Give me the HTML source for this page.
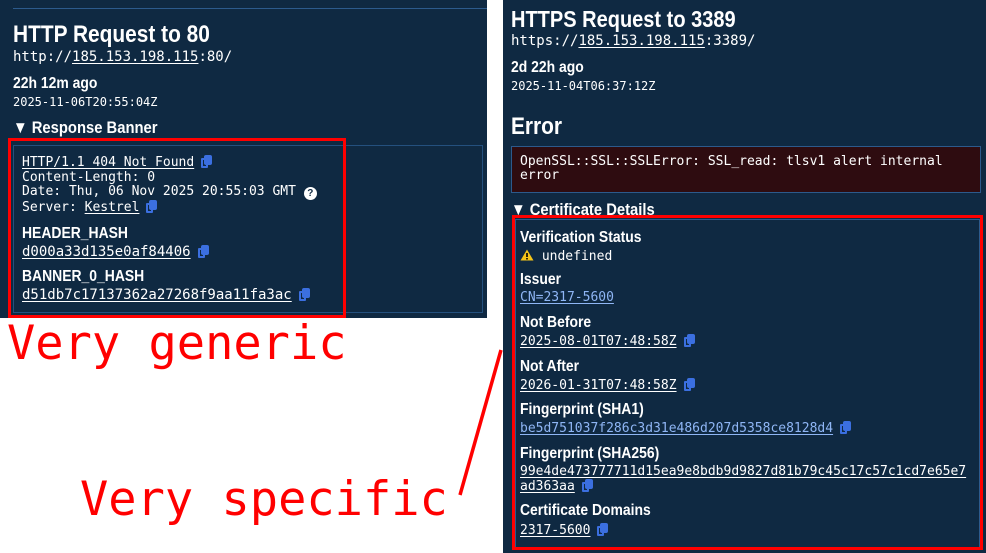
<!DOCTYPE html>
<html><head><meta charset="utf-8"><style>
body{margin:0;width:986px;height:553px;background:#fff;position:relative;overflow:hidden;font-family:"Liberation Sans",sans-serif;color:#fff}
.p{position:absolute;background:#0f2942}
.t{position:absolute;white-space:nowrap;line-height:1}
.h{font-family:"Liberation Sans Narrow","Liberation Sans",sans-serif;font-weight:bold;transform-origin:left top;transform:scaleX(.87)}
.m{font-family:"DejaVu Sans Mono","Liberation Mono",monospace;font-size:13px}
.u{text-decoration:underline;text-underline-offset:2px}
.lb{color:#8fb6f5}
.box{position:absolute;border:1px solid #2c5a8c}
.red{position:absolute;border:3px solid #ff0000}
.c{display:inline-block;width:11px;height:13px;position:relative;margin-left:7px;vertical-align:-2px}
.c:before{content:"";position:absolute;left:0;top:3px;width:7px;height:10px;border:2px solid #3b6fe0;border-radius:1px;box-sizing:border-box}
.c:after{content:"";position:absolute;left:3px;top:0;width:8px;height:10px;background:#3b6fe0;border-radius:2px}
.ann{position:absolute;font-family:"DejaVu Sans Mono",monospace;color:#f00;font-size:47px;line-height:1;white-space:nowrap}
</style></head><body>
<div class="p" style="left:0;top:0;width:487px;height:318px"></div>
<div style="position:absolute;left:13px;top:8px;width:474px;height:1px;background:#2c5a8c"></div>
<div class="t h" style="left:13px;top:23px;font-size:24px">HTTP Request to 80</div>
<div class="t m" style="left:13px;top:50px;font-size:14px">http://<span class="u">185.153.198.115</span>:80/</div>
<div class="t h" style="left:13px;top:76px;font-size:16px">22h 12m ago</div>
<div class="t m" style="left:13px;top:96px;font-size:12px">2025-11-06T20:55:04Z</div>
<div class="t h" style="left:13px;top:119px;font-size:17px">▼ Response Banner</div>
<div class="box" style="left:13px;top:145px;width:468px;height:166px;border-color:#24507e"></div>
<div class="red" style="left:8px;top:138px;width:332px;height:174px"></div>
<div class="t m" style="left:22px;top:155px"><span class="u">HTTP/1.1 404 Not Found</span><span class="c"></span></div>
<div class="t m" style="left:22px;top:171px">Content-Length: 0</div>
<div class="t m" style="left:22px;top:185px">Date: Thu, 06 Nov 2025 20:55:03 GMT <span style="display:inline-block;width:13px;height:13px;border-radius:50%;background:#fff;color:#0f2942;font:bold 10px 'Liberation Sans';text-align:center;line-height:13px;vertical-align:-1px">?</span></div>
<div class="t m" style="left:22px;top:200px">Server: <span class="u">Kestrel</span><span class="c"></span></div>
<div class="t h" style="left:22px;top:226px;font-size:16px">HEADER_HASH</div>
<div class="t m" style="left:22px;top:245px;font-size:14px"><span class="u">d000a33d135e0af84406</span><span class="c"></span></div>
<div class="t h" style="left:22px;top:269px;font-size:16px">BANNER_0_HASH</div>
<div class="t m" style="left:22px;top:288px;font-size:14px"><span class="u">d51db7c17137362a27268f9aa11fa3ac</span><span class="c"></span></div>

<div class="ann" style="left:7px;top:320px">Very generic</div>
<div class="ann" style="left:80px;top:476px">Very specific</div>
<svg style="position:absolute;left:0;top:0" width="986" height="553"><line x1="460" y1="495" x2="501" y2="350" stroke="#f00" stroke-width="3.5"/></svg>

<div class="p" style="left:503px;top:0;width:483px;height:553px"></div>
<div class="t h" style="left:511px;top:8px;font-size:23px">HTTPS Request to 3389</div>
<div class="t m" style="left:511px;top:34px;font-size:14px">https://<span class="u">185.153.198.115</span>:3389/</div>
<div class="t h" style="left:511px;top:60px;font-size:16px">2d 22h ago</div>
<div class="t m" style="left:511px;top:80px;font-size:12px">2025-11-04T06:37:12Z</div>
<div class="t h" style="left:511px;top:115px;font-size:24px">Error</div>
<div class="box" style="left:511px;top:146px;width:468px;height:45px;background:#2e0c10"></div>
<div class="t m" style="left:520px;top:155px">OpenSSL::SSL::SSLError: SSL_read: tlsv1 alert internal</div>
<div class="t m" style="left:520px;top:169px">error</div>
<div class="t h" style="left:511px;top:201px;font-size:17px">▼ Certificate Details</div>
<div class="box" style="left:515px;top:219px;width:463px;height:327px"></div>
<div class="red" style="left:512px;top:215px;width:465px;height:329px"></div>
<div class="t h" style="left:520px;top:230px;font-size:16px">Verification Status</div>
<div class="t m" style="left:520px;top:249px"><svg width="14" height="12" viewBox="0 0 14 12" style="vertical-align:-1px"><path d="M7 0.5L13.5 11.5H0.5Z" fill="#f5c518"/><rect x="6.2" y="4" width="1.6" height="4" fill="#000"/><rect x="6.2" y="9" width="1.6" height="1.5" fill="#000"/></svg> undefined</div>
<div class="t h" style="left:520px;top:272px;font-size:16px">Issuer</div>
<div class="t m lb" style="left:520px;top:291px"><span class="u">CN=2317-5600</span></div>
<div class="t h" style="left:520px;top:315px;font-size:16px">Not Before</div>
<div class="t m" style="left:520px;top:334px"><span class="u">2025-08-01T07:48:58Z</span><span class="c"></span></div>
<div class="t h" style="left:520px;top:359px;font-size:16px">Not After</div>
<div class="t m" style="left:520px;top:378px"><span class="u">2026-01-31T07:48:58Z</span><span class="c"></span></div>
<div class="t h" style="left:520px;top:402px;font-size:16px">Fingerprint (SHA1)</div>
<div class="t m lb" style="left:520px;top:421px"><span class="u">be5d751037f286c3d31e486d207d5358ce8128d4</span><span class="c"></span></div>
<div class="t h" style="left:520px;top:446px;font-size:16px">Fingerprint (SHA256)</div>
<div class="t m" style="left:520px;top:465px"><span class="u">99e4de473777711d15ea9e8bdb9d9827d81b79c45c17c57c1cd7e65e7</span></div>
<div class="t m" style="left:520px;top:479px"><span class="u">ad363aa</span><span class="c"></span></div>
<div class="t h" style="left:520px;top:503px;font-size:16px">Certificate Domains</div>
<div class="t m" style="left:520px;top:523px"><span class="u">2317-5600</span><span class="c"></span></div>
</body></html>
